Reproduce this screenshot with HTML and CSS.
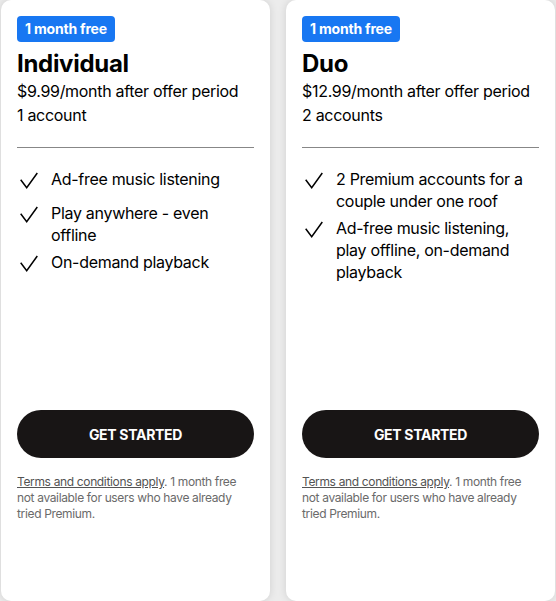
FILE: index.html
```html
<!DOCTYPE html>
<html lang="en">
<head>
    <meta charset="UTF-8">
    <meta name="viewport" content="width=device-width, initial-scale=1.0">
    <title>Premium plans</title>
    <link rel="stylesheet" href="styles.css">
</head>
<body>
    <div class="plans">
        <!-- Individual plan -->
        <div class="plan">
            <div class="plan-head">
                <span class="badge">1 month free</span>
                <h2 class="plan-name">Individual</h2>
                <p class="plan-line">$9.99/month after offer period</p>
                <p class="plan-line">1 account</p>
            </div>
            <hr class="divider">
            <ul class="features">
                <li><svg class="check" viewBox="0 0 24 24"><path d="M3.7 11.7 9.7 19.7 20.3 5"/></svg><span>Ad-free music listening</span></li>
                <li><svg class="check" viewBox="0 0 24 24"><path d="M3.7 11.7 9.7 19.7 20.3 5"/></svg><span>Play anywhere - even offline</span></li>
                <li><svg class="check" viewBox="0 0 24 24"><path d="M3.7 11.7 9.7 19.7 20.3 5"/></svg><span>On-demand playback</span></li>
            </ul>
            <button class="start-btn">GET STARTED</button>
            <p class="terms"><a href="#">Terms and conditions apply</a>. 1 month free not available for users who have already tried Premium.</p>
        </div>

        <!-- Duo plan -->
        <div class="plan">
            <div class="plan-head">
                <span class="badge">1 month free</span>
                <h2 class="plan-name">Duo</h2>
                <p class="plan-line">$12.99/month after offer period</p>
                <p class="plan-line">2 accounts</p>
            </div>
            <hr class="divider">
            <ul class="features">
                <li><svg class="check" viewBox="0 0 24 24"><path d="M3.7 11.7 9.7 19.7 20.3 5"/></svg><span>2 Premium accounts for a couple under one roof</span></li>
                <li><svg class="check" viewBox="0 0 24 24"><path d="M3.7 11.7 9.7 19.7 20.3 5"/></svg><span>Ad-free music listening, play offline, on-demand playback</span></li>
            </ul>
            <button class="start-btn">GET STARTED</button>
            <p class="terms"><a href="#">Terms and conditions apply</a>. 1 month free not available for users who have already tried Premium.</p>
        </div>
    </div>
</body>
</html>
```

FILE: styles.css
```css
body {
    margin: 0;
    background-color: #ececec;
    font-family: Inter, "Liberation Sans", Arial, sans-serif;
    color: #000;
    overflow: hidden;
}

.plans {
    display: grid;
    grid-template-columns: 269px 269px;
    gap: 16px;
    padding-left: 1px;
}

.plan {
    height: 601px;
    box-sizing: border-box;
    background: #fff;
    border-radius: 10px;
    box-shadow: 0 0 8px rgba(0, 0, 0, 0.12);
    padding: 16px 16px 79px 16px;
    display: flex;
    flex-direction: column;
}

.plan-head {
    display: flex;
    flex-direction: column;
    align-items: flex-start;
}

.badge {
    background: #1877f2;
    color: #fff;
    font-size: 14px;
    font-weight: 700;
    letter-spacing: -0.2px;
    line-height: 26px;
    padding: 0 8px;
    border-radius: 4px;
}

.plan-name {
    margin: 6px 0 0 0;
    font-size: 24px;
    line-height: 31px;
    font-weight: 700;
    letter-spacing: -0.3px;
}

.plan-line {
    margin: 0;
    font-size: 16px;
    line-height: 24px;
    letter-spacing: -0.3px;
    color: #000;
}

.divider {
    border: none;
    border-top: 1px solid #878787;
    margin: 20px 0 20px 0;
    width: 100%;
}

.features {
    list-style: none;
    margin: 0;
    padding: 0;
    flex: 1;
    display: flex;
    flex-direction: column;
    gap: 5px;
}

.features li {
    display: flex;
    align-items: flex-start;
    gap: 10px;
    font-size: 16px;
    line-height: 22px;
    letter-spacing: -0.3px;
}

.check {
    width: 24px;
    height: 24px;
    flex-shrink: 0;
    margin-bottom: 5px;
    fill: none;
    stroke: #000;
    stroke-width: 1.5;
}

.start-btn {
    height: 48px;
    width: 100%;
    border: none;
    border-radius: 24px;
    background: #181515;
    color: #fff;
    font-family: inherit;
    font-size: 14px;
    font-weight: 700;
    letter-spacing: -0.3px;
    cursor: pointer;
}

.terms {
    margin: 16px 0 0 0;
    font-size: 12px;
    line-height: 16px;
    letter-spacing: -0.35px;
    color: #6a6a6a;
}

.terms a {
    color: #535353;
    text-decoration: underline;
}
```
